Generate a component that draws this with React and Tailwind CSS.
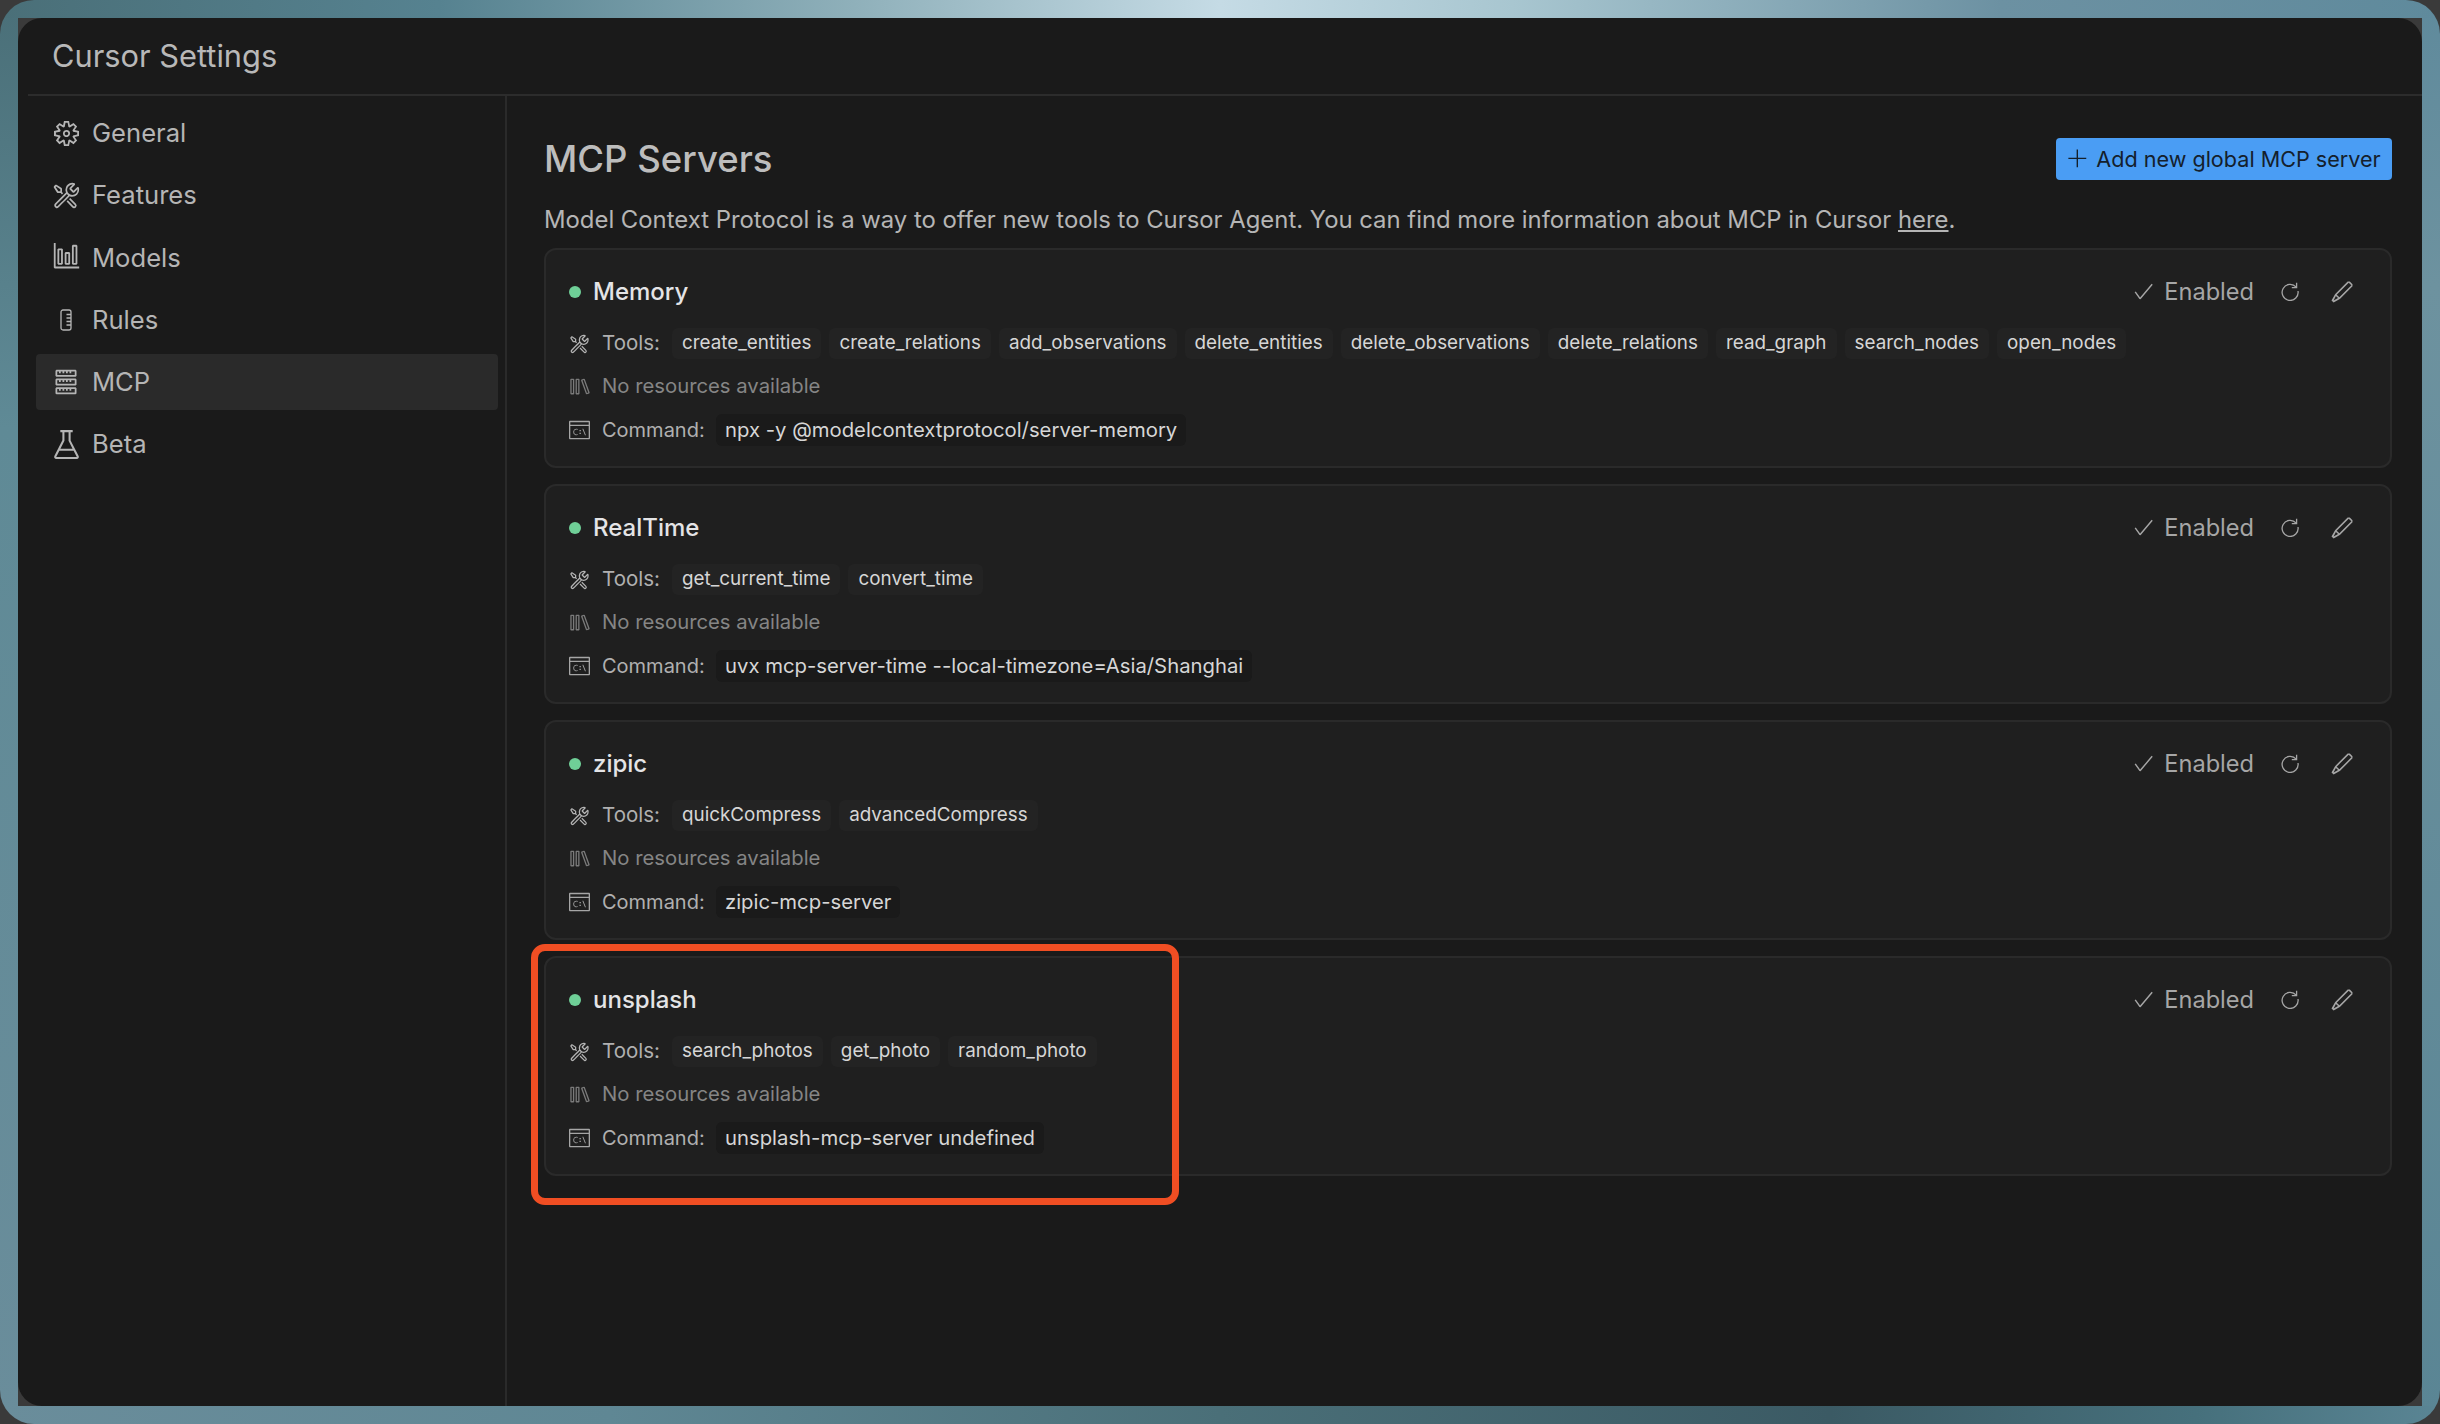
import React from "react";
import { VscSettingsGear, VscTools, VscGraph, VscServer, VscBeaker, VscLibrary, VscTerminalCmd, VscCheck, VscEdit, VscAdd } from "react-icons/vsc";

const RulerIcon = ({ className }) => (
  <svg viewBox="0 0 12 22" className={className} fill="none" stroke="currentColor" strokeWidth="1.3">
    <rect x="1" y="1" width="10" height="20" rx="2" />
    <path d="M6.5 5.5H11M6.5 9H11M6.5 12.5H11M6.5 16H11" />
  </svg>
);

const RefreshIcon = ({ className }) => (
  <svg viewBox="0 0 20 20" className={className} fill="none" stroke="currentColor" strokeWidth="1.3">
    <path d="M16.2 6.2A8 8 0 1 0 18 10" />
    <path d="M16.6 1.8V6.6H11.8" />
  </svg>
);

const nav = [
  ["General", VscSettingsGear, "text-[25px]"],
  ["Features", VscTools, "text-[29px]"],
  ["Models", VscGraph, "text-[29px]"],
  ["Rules", null, ""],
  ["MCP", VscServer, "text-[28px]"],
  ["Beta", VscBeaker, "text-[33px]"],
];

const servers = [
  { name: "Memory", tools: ["create_entities", "create_relations", "add_observations", "delete_entities", "delete_observations", "delete_relations", "read_graph", "search_nodes", "open_nodes"], cmd: "npx -y @modelcontextprotocol/server-memory" },
  { name: "RealTime", tools: ["get_current_time", "convert_time"], cmd: "uvx mcp-server-time --local-timezone=Asia/Shanghai" },
  { name: "zipic", tools: ["quickCompress", "advancedCompress"], cmd: "zipic-mcp-server" },
  { name: "unsplash", tools: ["search_photos", "get_photo", "random_photo"], cmd: "unsplash-mcp-server undefined" },
];

function Card({ s }) {
  return (
    <div className="h-[220px] rounded-[12px] border-2 border-[#2a2a2a] bg-[#1f1f1f] pl-[23px] pr-[36px] pt-[24px]">
      <div className="flex h-[36px] items-center justify-between">
        <div className="flex items-center">
          <span className="h-[12px] w-[12px] rounded-full bg-[#6fcf97]" />
          <span className="ml-[12px] text-[24px] font-medium text-[#e4e4e6]">{s.name}</span>
        </div>
        <div className="flex items-center text-[#a6a6a6]">
          <VscCheck className="text-[23px]" />
          <span className="ml-[9px] text-[23.6px]">Enabled</span>
          <RefreshIcon className="mb-[2px] ml-[26px] h-[20px] w-[20px]" />
          <VscEdit className="ml-[30px] text-[24px]" />
        </div>
      </div>
      <div className="mt-[17px] flex h-[33px] items-center">
        <VscTools className="w-[21px] text-[22px] text-[#b5b5b5]" />
        <span className="ml-[12px] w-[70px] text-[20.5px] text-[#b0b0b0]">Tools:</span>
        <div className="flex gap-[8px]">
          {s.tools.map((t) => (
            <span key={t} className="flex h-[31px] items-center rounded-[6px] bg-[#232323] px-[10px] text-[18.85px] text-[#d6d6d6]">{t}</span>
          ))}
        </div>
      </div>
      <div className="mt-[10px] flex h-[33px] items-center">
        <VscLibrary className="w-[21px] text-[21px] text-[#7a7a7a]" />
        <span className="ml-[12px] text-[20.3px] text-[#858585]">No resources available</span>
      </div>
      <div className="mt-[11px] flex h-[32px] items-center">
        <VscTerminalCmd className="w-[21px] text-[22px] text-[#a6a6a6]" />
        <span className="ml-[12px] w-[114px] text-[20px] text-[#b0b0b0]">Command:</span>
        <span className="flex h-[32px] items-center rounded-[6px] bg-[#1a1a1a] px-[9px] text-[20.3px] text-[#d6d6d6]">{s.cmd}</span>
      </div>
    </div>
  );
}

export default function App() {
  return (
    <div className="h-[1424px] w-[2440px] bg-[#3a3a3a] font-['Inter',sans-serif]">
      <div className="relative h-full w-full rounded-[34px] p-[18px] [background:linear-gradient(90deg,#4a6f78_0%,#568290_18%,#8fb0ba_35%,#c5dbe5_50%,#a8c6d0_62%,#6c91a2_82%,#5f8a9c_100%)_top/100%_18px_no-repeat,linear-gradient(90deg,#6a8d9b_0%,#5f8794_25%,#4a6f78_50%,#3b5a64_75%,#46707c_90%,#5a8594_100%)_bottom/100%_18px_no-repeat,linear-gradient(180deg,#4a6f78_0%,#5f8a96_30%,#6a8d9b_100%)_left/18px_100%_no-repeat,linear-gradient(180deg,#5f8a9c_0%,#6d929f_20%,#5a8594_100%)_right/18px_100%_no-repeat]">
        <div className="flex h-full flex-col overflow-hidden rounded-[24px] bg-[#1a1a1a]">
          <div className="ml-[10px] flex h-[78px] shrink-0 items-center border-b-2 border-[#2c2c2c] pl-[24px]">
            <span className="text-[30.8px] text-[#b8b8b8]">Cursor Settings</span>
          </div>
          <div className="flex min-h-0 flex-1">
            <aside className="w-[489px] shrink-0 border-r-2 border-[#2a2a2a] pl-[18px] pr-[7px] pt-[9.5px]">
              <nav className="flex flex-col gap-[6.2px]">
                {nav.map(([label, Icon, size]) => (
                  <div key={label} className={`flex h-[56px] items-center rounded-[4px] pl-[18px] ${label === "MCP" ? "bg-[#2a2a2a]" : ""}`}>
                    <span className="flex w-[24px] items-center justify-center text-[#b5b5b5]">
                      {Icon ? <Icon className={`shrink-0 ${size}`} /> : <RulerIcon className="h-[22px] w-[12px]" />}
                    </span>
                    <span className="ml-[14px] text-[25.6px] text-[#b5b5b5]">{label}</span>
                  </div>
                ))}
              </nav>
            </aside>
            <main className="min-w-0 flex-1 pl-[37px] pr-[30px]">
              <div className="mt-[42px] flex h-[42px] items-center justify-between">
                <h1 className="text-[36.5px] font-medium text-[#bdbdbd]">MCP Servers</h1>
                <button className="flex h-[42px] w-[336px] items-center justify-center whitespace-nowrap rounded-[4px] bg-[#4a9df4] text-[21.6px] text-[#14202c]">
                  <VscAdd className="mr-[7px] text-[22px]" />
                  Add new global MCP server
                </button>
              </div>
              <p className="mt-[22px] h-[36px] text-[23.87px] leading-[36px] text-[#b5b5b5]">
                Model Context Protocol is a way to offer new tools to Cursor Agent. You can find more information about MCP in Cursor <span className="underline">here</span>.
              </p>
              <div className="mt-[10px] flex flex-col gap-[16px]">
                {servers.map((s) => <Card key={s.name} s={s} />)}
              </div>
            </main>
          </div>
        </div>
        <div className="absolute left-[531px] top-[944px] h-[261px] w-[648px] rounded-[14px] border-[7px] border-[#f04e23]" />
      </div>
    </div>
  );
}
